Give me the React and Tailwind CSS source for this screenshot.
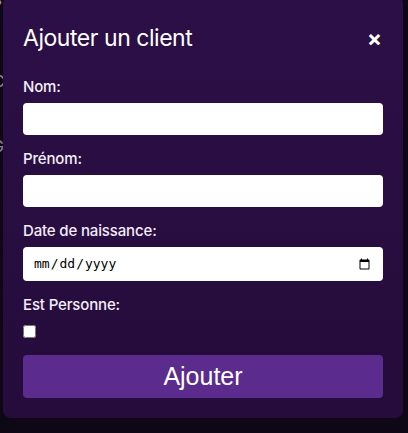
import React from "react";

export default function App() {
  return (
    <div className="relative w-[408px] h-[433px] overflow-hidden bg-[#0e0716]" style={{ fontFamily: "Inter, 'Liberation Sans', sans-serif" }}>
      {/* background page slivers */}
      <div className="absolute left-[-6px] top-[-8px] text-[#9a93a3] text-[15px] leading-none">s</div>
      <div className="absolute left-[-7px] top-[73px] text-[#8d8596] text-[16px] leading-none">C</div>
      <div className="absolute left-[-8px] top-[138px] text-[#8d8596] text-[16px] leading-none">G</div>
      <div className="absolute left-[3px] top-[-4px] w-[400px] rounded-lg bg-gradient-to-b from-[#2c0f47] to-[#250c3b] px-5 pb-5 pt-[26px]">
        <div className="flex items-center justify-between h-8">
          <h2 className="text-[23px] tracking-[-0.02em] text-white font-normal leading-8">Ajouter un client</h2>
          <button className="text-white text-[22px] font-bold leading-none pr-[1px]">×</button>
        </div>
        <div className="mt-[23px] flex flex-col">
          <label className="text-[15px] leading-5 text-[#f4eefa] font-medium tracking-[-0.01em]">Nom:</label>
          <input type="text" className="mt-[6px] h-8 w-full rounded bg-white" />
          <label className="mt-[14px] text-[15px] leading-5 text-[#f4eefa] font-medium tracking-[-0.01em]">Prénom:</label>
          <input type="text" className="mt-[6px] h-8 w-full rounded bg-white" />
          <label className="mt-[14px] text-[15px] leading-5 text-[#f4eefa] font-medium tracking-[-0.01em]">Date de naissance:</label>
          <input type="date" className="mt-[6px] h-[34px] w-full rounded bg-white px-[10px] text-[13px] text-black" style={{ fontFamily: "'DejaVu Sans Mono', monospace" }} />
          <label className="mt-[14px] text-[15px] leading-5 text-[#f4eefa] font-medium tracking-[-0.01em]">Est Personne:</label>
          <div className="mt-[10px] h-[13px] flex">
            <input type="checkbox" className="w-[13px] h-[13px] m-0" />
          </div>
          <button className="mt-[17px] h-[43px] w-full rounded bg-[#5b2b8d] text-white text-[25px]" style={{ fontFamily: "'Liberation Sans', Arial, sans-serif" }}>Ajouter</button>
        </div>
      </div>
    </div>
  );
}
